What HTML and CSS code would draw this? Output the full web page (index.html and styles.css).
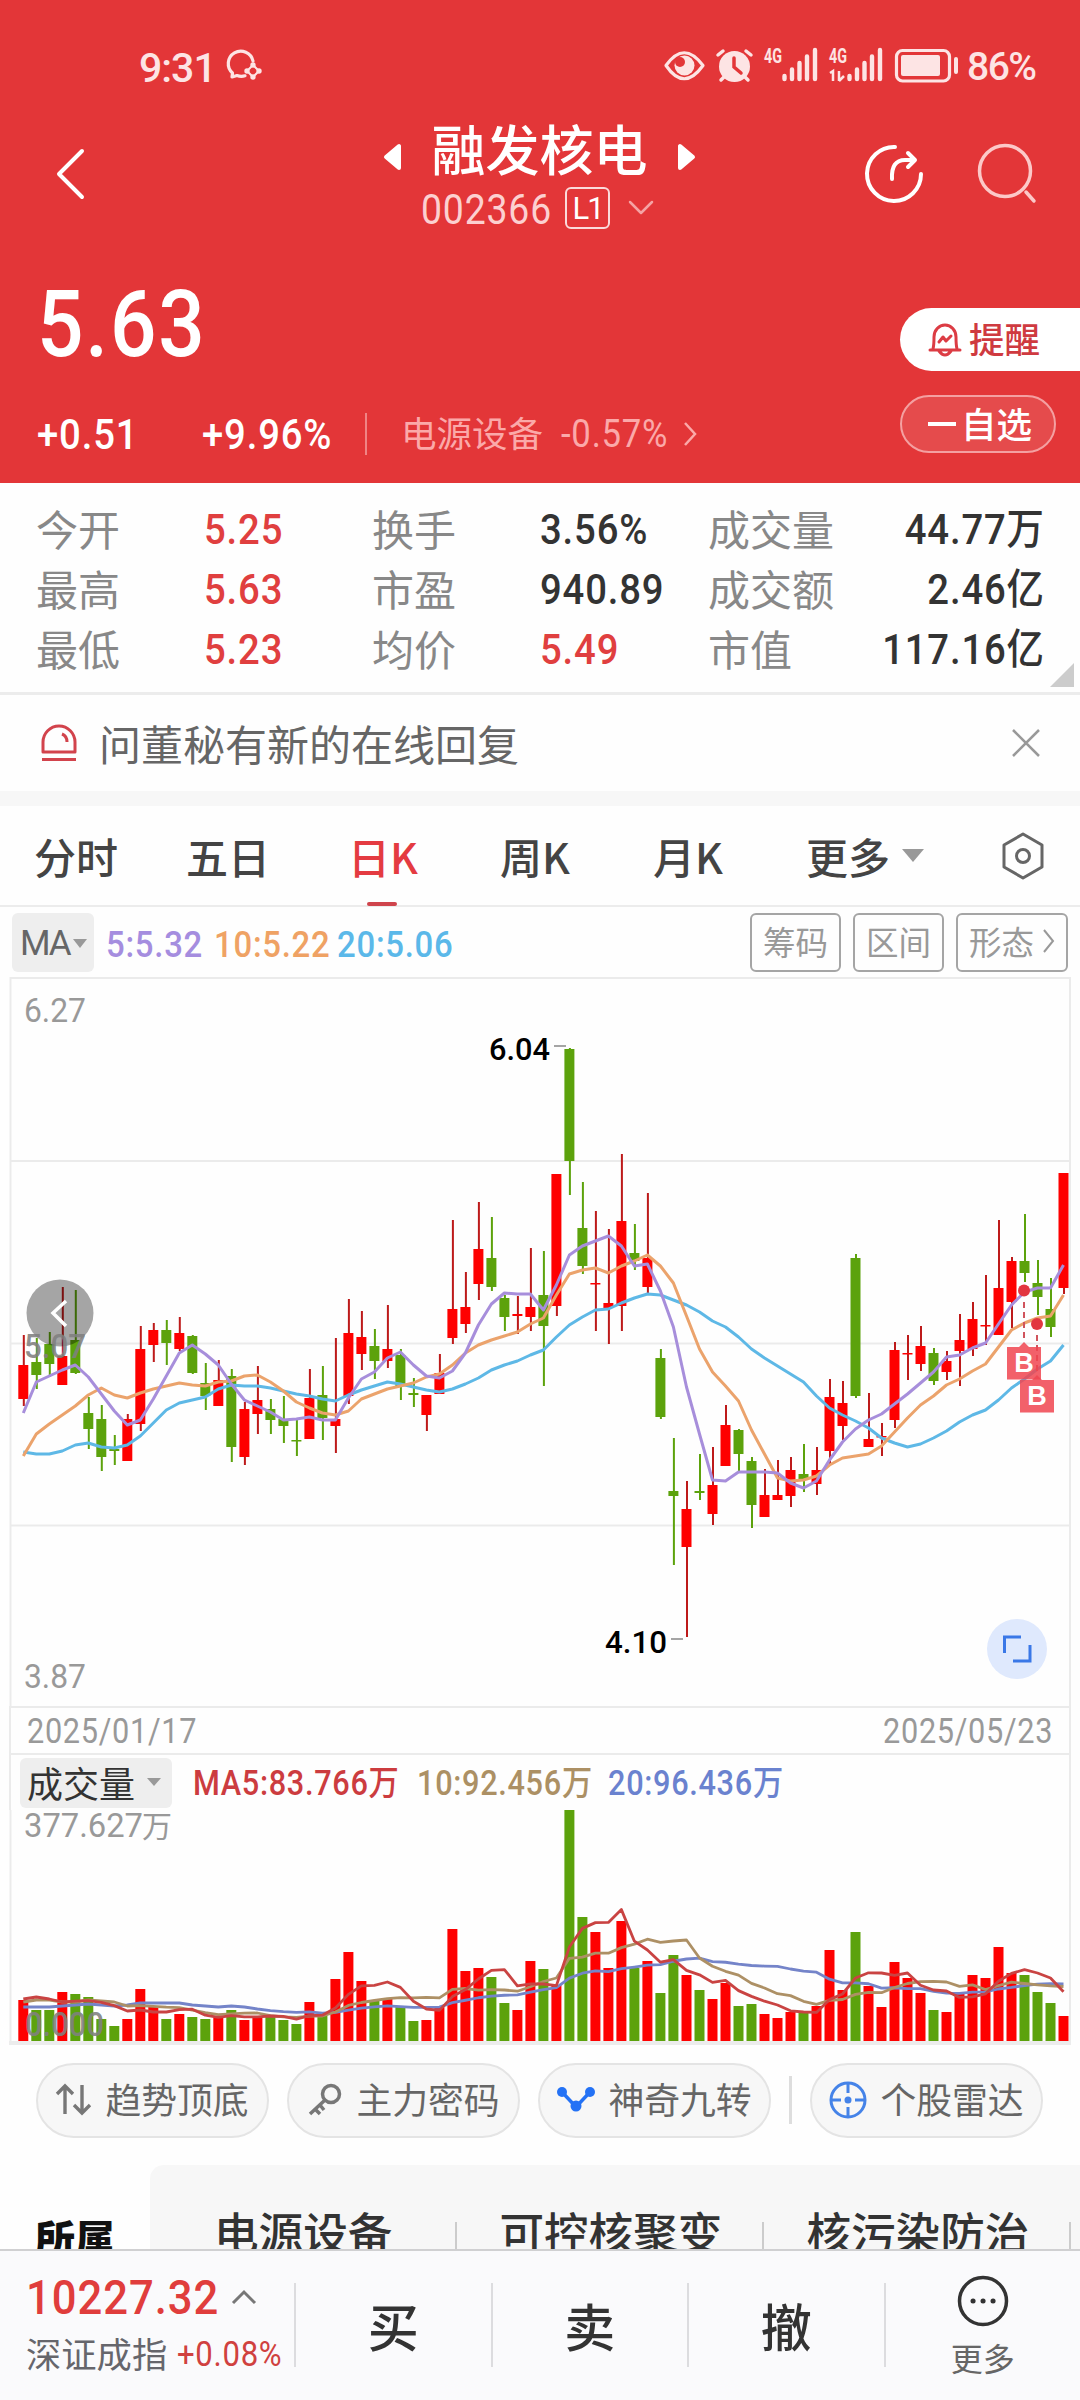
FILE: index.html
```html
<!DOCTYPE html>
<html lang="zh-CN">

<head>
    <meta charset="UTF-8">
    <meta name="viewport" content="width=device-width, initial-scale=1.0">
    <title>融发核电 002366</title>
    <link rel="stylesheet" href="styles.css">
</head>

<body>
    <header class="header">
        <div class="status-bar">
            <span class="clock">9:31</span>
            <svg class="status-msg" width="38" height="34" viewBox="0 0 38 34" fill="none" stroke="#fde4e4" stroke-width="3.2">
                <path d="M27 12A12.5 12.5 0 1 0 6.500 24L6 28L11 26.500Q15 28 19 26.800" stroke-linecap="round" stroke-linejoin="round" />
                <path d="M27 16L33 22L27 28L21 22Z" stroke-width="2" />
                <g fill="#fde4e4" stroke="none"><circle cx="27" cy="16" r="2.700" /><circle cx="33" cy="22" r="2.700" /><circle cx="27" cy="28" r="2.700" /><circle cx="21" cy="22" r="2.700" /></g>
            </svg>
            <svg class="status-icons" width="300" height="40" viewBox="660 46 300 40">
                <g fill="none" stroke="#fde4e4" stroke-width="3.2">
                    <path d="M666 65.500Q684 40 703 65.500Q684 92 666 65.500Z" stroke-linejoin="round" />
                    <rect x="896.500" y="50.500" width="53" height="30.500" rx="6" />
                </g>
                <g fill="#fde4e4">
                    <circle cx="684.500" cy="65.500" r="10" />
                    <circle cx="734.500" cy="66.500" r="15.500" />
                    <rect x="901" y="55" width="39" height="21" rx="2" />
                    <rect x="954" y="57" width="4" height="17" rx="2" />
                </g>
                <circle cx="680" cy="62" r="5" fill="#e33638" />
                <path d="M734 58V67L741 73" fill="none" stroke="#e33638" stroke-width="3.500" stroke-linecap="round" />
                <path d="M718 55L723 51M751 55L746 51M721 80L725 76M748 80L744 76" stroke="#fde4e4" stroke-width="3.500" stroke-linecap="round" />
                <path d="M784.500 76V79M792 69.500V79M799.500 63V79M807 56.500V79M815 50V79M849.500 76V79M857 69.500V79M864.500 63V79M872 56.500V79M880 50V79" stroke="#fde4e4" stroke-width="4.400" stroke-linecap="round" />
                <path d="M830 73L833 71V81M839 71V81M839 81L844 76" fill="none" stroke="#fde4e4" stroke-width="2.500" />
                <text class="net" x="764" y="63" textLength="18" lengthAdjust="spacingAndGlyphs">4G</text>
                <text class="net" x="829" y="63" textLength="18" lengthAdjust="spacingAndGlyphs">4G</text>
            </svg>
            <span class="battery">86%</span>
        </div>

        <div class="nav">
            <svg class="back" width="30" height="52" viewBox="0 0 30 52"><path d="M27 3L4 26L27 49" /></svg>
            <div class="title">
                <div class="title-name">
                    <svg width="18" height="28" viewBox="0 0 18 28"><path d="M16 3V25L3 14Z" /></svg>
                    <h1>融发核电</h1>
                    <svg width="18" height="28" viewBox="0 0 18 28"><path d="M2 3V25L15 14Z" /></svg>
                </div>
                <div class="title-code">
                    <span class="code num">002366</span>
                    <span class="level">L1</span>
                    <svg width="26" height="16" viewBox="0 0 26 16"><path d="M2 2L13 13L24 2" /></svg>
                </div>
            </div>
            <svg class="share" width="62" height="62" viewBox="0 0 62 62">
                <path d="M32 4A27 27 0 1 0 58 31" />
                <path d="M29 36Q28 17 42 17H51M45 10L52 17L45 24" />
            </svg>
            <svg class="search" width="60" height="62" viewBox="0 0 60 62"><circle cx="28" cy="29" r="25.500" /><path d="M49 50L57 59" /></svg>
        </div>

        <div class="quote">
            <div class="price num">5.63</div>
            <div class="change">
                <span class="diff num">+0.51</span>
                <span class="pct num">+9.96%</span>
                <span class="sector">电源设备</span>
                <span class="sector-pct num">-0.57%</span>
                <svg width="14" height="26" viewBox="0 0 14 26"><path d="M2 2L12 13L2 24" /></svg>
            </div>
            <div class="alert-btn">
                <svg width="36" height="36" viewBox="0 0 36 36">
                    <path d="M3 28H33M6 27Q7 23 7 15A11 12 0 0 1 29 15Q29 23 30 27M12 29Q18 37 24 29M12 20L16 15L19 19L24 14" />
                </svg>
                <span>提醒</span>
            </div>
            <div class="fav-btn"><i></i><span>自选</span></div>
        </div>
    </header>

    <section class="stats">
        <span class="k">今开</span><span class="v red num">5.25</span><span class="k">换手</span><span class="v num">3.56%</span><span class="k">成交量</span><span class="v end num">44.77<b>万</b></span>
        <span class="k">最高</span><span class="v red num">5.63</span><span class="k">市盈</span><span class="v num">940.89</span><span class="k">成交额</span><span class="v end num">2.46<b>亿</b></span>
        <span class="k">最低</span><span class="v red num">5.23</span><span class="k">均价</span><span class="v red num">5.49</span><span class="k">市值</span><span class="v end num">117.16<b>亿</b></span>
        <div class="corner"></div>
    </section>

    <section class="notice">
        <svg width="36" height="38" viewBox="0 0 36 38"><path d="M2 28V18A16 16 0 0 1 34 18V28ZM1 35.500H35M21 10Q26 12 26 18" /></svg>
        <span>问董秘有新的在线回复</span>
        <svg class="close" width="28" height="28" viewBox="0 0 28 28"><path d="M1 1L27 27M27 1L1 27" /></svg>
    </section>

    <nav class="tabs">
        <span>分时</span>
        <span>五日</span>
        <span class="active">日K</span>
        <span>周K</span>
        <span>月K</span>
        <span class="more">更多</span>
        <svg class="gear" width="44" height="48" viewBox="0 0 44 48"><path d="M22 2L41 13V35L22 46L3 35V13Z" /><circle cx="22" cy="24" r="6.500" /></svg>
    </nav>

    <div class="ma-row">
        <div class="ma-select">MA</div>
        <span class="ma5 num">5:5.32</span>
        <span class="ma10 num">10:5.22</span>
        <span class="ma20 num">20:5.06</span>
        <div class="ma-btns">
            <span>筹码</span>
            <span>区间</span>
            <span>形态<svg width="12" height="26" viewBox="0 0 12 26"><path d="M1 2L10 13L1 24" /></svg></span>
        </div>
    </div>

    <svg class="kline" id="kline" width="1080" height="729" viewBox="0 7 1080 729">
        <path class="grid" d="M10 191H1070M10 373.500H1070M10 555.500H1070" />
        <path class="frame" d="M10.500 736V8H1070V736" />
        <g id="candles"></g>
        <g id="lines"></g>
        <g class="marker">
            <circle cx="1024" cy="320.500" r="6" /><circle cx="1037" cy="354" r="6" />
            <path d="M1024 332V368M1037 365V404" />
            <path class="tag" d="M1007 377H1019L1024 372L1029 377H1041V409.500H1007Z" />
            <path class="tag" d="M1020 410H1032L1037 405L1042 410H1054V442.500H1020Z" />
            <text x="1024" y="402">B</text><text x="1037" y="435">B</text>
        </g>
        <circle cx="60" cy="343" r="33.500" fill="rgba(0,0,0,.35)" />
        <path d="M66 331L53 343L66 356" fill="none" stroke="#fff" stroke-width="3.500" />
        <g class="axis">
            <text x="24" y="52" textLength="62" lengthAdjust="spacingAndGlyphs">6.27</text>
            <text class="over" x="24" y="388" textLength="62" lengthAdjust="spacingAndGlyphs">5.07</text>
            <text x="24" y="718" textLength="62" lengthAdjust="spacingAndGlyphs">3.87</text>
        </g>
        <g class="peak">
            <text x="489" y="90" textLength="61" lengthAdjust="spacingAndGlyphs">6.04</text>
            <text x="605" y="683" textLength="62" lengthAdjust="spacingAndGlyphs">4.10</text>
            <path d="M554 76H566M671 669H683" />
        </g>
        <circle cx="1017" cy="679" r="30" fill="#dfe9fd" />
        <path d="M1004.500 683V667H1021M1030 675V691H1013" fill="none" stroke="#3a78e7" stroke-width="3" />
    </svg>

    <div class="dates"><span class="num">2025/01/17</span><span class="num">2025/05/23</span></div>

    <div class="vol-row">
        <div class="vol-select">成交量</div>
        <span class="v5 num">MA5:83.766<b>万</b></span>
        <span class="v10 num">10:92.456<b>万</b></span>
        <span class="v20 num">20:96.436<b>万</b></span>
    </div>
    <svg class="volume" width="1080" height="236" viewBox="0 0 1080 236">
        <path class="frame" d="M10.500 0V234M1070 0V234" />
        <path d="M9 233H1071" stroke="#ececec" stroke-width="4" />
        <g id="bars"></g>
        <g id="volLines"></g>
        <g class="axis">
            <text x="24" y="27" textLength="119" lengthAdjust="spacingAndGlyphs">377.627</text>
            <text x="142" y="27" class="unit">万</text>
            <text class="over" x="25" y="226" textLength="79" lengthAdjust="spacingAndGlyphs">0.000</text>
        </g>
    </svg>

    <div class="chips">
        <div class="chip">
            <svg width="36" height="34" viewBox="0 0 36 34"><path d="M9 31V3M1 11L9 3L17 11M26 2V30M18 22L26 30L34 22" stroke="#777" stroke-width="3.400" /></svg><span>趋势顶底</span>
        </div>
        <div class="chip">
            <svg width="36" height="34" viewBox="0 0 36 34"><circle cx="24" cy="11" r="8.500" stroke="#777" stroke-width="3.500" /><path d="M18 17L3 31M8 26L13 31M13 22L17 27" stroke="#777" stroke-width="3.500" /></svg><span>主力密码</span>
        </div>
        <div class="chip">
            <svg width="38" height="34" viewBox="0 0 38 34"><path d="M5 9L19 24L33 9" fill="none" stroke="#2472f5" stroke-width="3.500" /><g fill="#2472f5"><circle cx="5" cy="9" r="5" /><circle cx="19" cy="23" r="5.500" /><circle cx="33" cy="9" r="5" /></g></svg><span>神奇九转</span>
        </div>
        <i class="chip-line"></i>
        <div class="chip">
            <svg width="38" height="38" viewBox="0 0 38 38"><g stroke="#4583e8" stroke-width="3"><circle cx="19" cy="19" r="17" /><path d="M19 2V12M19 26V36M2 19H12M26 19H36" /></g><circle cx="19" cy="19" r="3.500" fill="#4583e8" /></svg><span>个股雷达</span>
        </div>
    </div>

    <div class="concepts">
        <strong>所属</strong>
        <div class="concept-list"><span>电源设备</span><span>可控核聚变</span><span>核污染防治</span></div>
    </div>

    <footer class="bottom-bar">
        <div class="index">
            <div class="index-value"><span class="num">10227.32</span><svg width="26" height="16" viewBox="0 0 26 16"><path d="M2 14L13 3L24 14" /></svg></div>
            <div class="index-name">深证成指<span class="num">+0.08%</span></div>
        </div>
        <div class="action">买</div>
        <div class="action">卖</div>
        <div class="action">撤</div>
        <div class="action more-action">
            <svg width="52" height="52" viewBox="0 0 52 52"><circle cx="26" cy="26" r="23.500" /><path d="M16 26H16.100M26 26H26.100M36 26H36.100" /></svg>
            更多
        </div>
    </footer>

    <script src="script.js"></script>
</body>

</html>
```

FILE: styles.css
```css
* {
    margin: 0;
    padding: 0;
    box-sizing: border-box;
}

body {
    width: 1080px;
    height: 2400px;
    overflow: hidden;
    background: #fefefe;
    color: #333;
    font-family: "Noto Sans CJK SC", sans-serif;
    font-size: 42px;
    line-height: 1;
    white-space: nowrap;
}

svg {
    display: block;
    flex: none;
    overflow: visible;
}

/* condensed figures */
.num {
    font-family: Roboto, "Noto Sans CJK SC", sans-serif;
    font-weight: 500;
    letter-spacing: 0.022em;
    transform: scaleX(.89);
    transform-origin: left center;
}

/* header */
.header {
    height: 483px;
    background: #e33638;
    color: #fff;
}

.status-bar {
    height: 132px;
    display: flex;
    align-items: center;
    padding-left: 139px;
    color: #fde4e4;
    font-family: Roboto, sans-serif;
    font-weight: 500;
    font-size: 41px;
}

.clock {
    width: 87px;
    padding-top: 4px;
    letter-spacing: -1px;
}

.status-icons {
    margin-left: 396px;
}

.battery {
    margin-left: 7px;
    padding-top: 3px;
    font-size: 39px;
    letter-spacing: -1.5px;
}

.net {
    font-size: 21px;
    font-weight: 700;
    fill: #fde4e4;
}

.nav {
    height: 106px;
    display: flex;
    padding-left: 55px;
}

.nav path,
.nav circle {
    fill: none;
    stroke: #fff;
    stroke-width: 4;
    stroke-linecap: round;
    stroke-linejoin: round;
}

.back {
    margin-top: 16px;
}

.title {
    width: 320px;
    margin-left: 295px;
}

.title-name {
    height: 50px;
    display: flex;
    align-items: center;
    justify-content: space-between;
    padding: 0 4px 0 3px;
    margin-top: -6px;
}

.title-name h1 {
    margin-top: -7px;
    font-size: 54px;
    font-weight: 500;
    line-height: 50px;
}

.title-name svg {
    margin-top: 11px;
}

.title-name path {
    fill: #fff;
}

.title-code {
    height: 42px;
    display: flex;
    align-items: center;
    margin: 11px 0 0 41px;
}

.code {
    width: 144px;
    font-size: 42px;
    font-weight: 400;
    color: #fcd0d0;
    padding-top: 4px;
}

.level {
    width: 45px;
    height: 42px;
    border: 2px solid #fbdada;
    border-radius: 6px;
    font-family: Roboto, sans-serif;
    font-size: 31px;
    letter-spacing: -2px;
    line-height: 40px;
    text-align: center;
    margin-right: 18px;
}

.title-code path {
    stroke: #f5a3a4;
    stroke-width: 2.5;
}

.share {
    margin: 11px 0 0 163px;
}

.search {
    margin: 10px 0 0 52px;
}

.search path,
.search circle {
    stroke: #fcc8c8;
    stroke-width: 3.5;
}

.quote {
    position: relative;
    padding-left: 37px;
}

.price {
    height: 171px;
    padding-top: 41px;
    font-size: 92px;
    line-height: 92px;
}

.change {
    display: flex;
    align-items: center;
    height: 50px;
    font-size: 43px;
}

.diff {
    width: 165px;
}

.pct {
    width: 163px;
}

.sector {
    height: 42px;
    line-height: 38px;
    padding-left: 34px;
    border-left: 2px solid #f08485;
    font-size: 35.5px;
    color: #fba9a9;
}

.sector-pct {
    width: 122px;
    margin-left: 18px;
    font-size: 39px;
    font-weight: 400;
    color: #fba9a9;
}

.change path {
    fill: none;
    stroke: #fba9a9;
    stroke-width: 2.5;
}

.alert-btn,
.fav-btn {
    position: absolute;
    left: 900px;
    display: flex;
    align-items: center;
    font-size: 35.5px;
    font-weight: 500;
}

.alert-btn span,
.fav-btn span {
    margin-top: -3px;
}

.alert-btn {
    top: 70px;
    width: 180px;
    height: 63px;
    padding-left: 27px;
    gap: 6px;
    background: #fff;
    color: #cf3a40;
    border-radius: 32px 0 0 32px;
}

.alert-btn path {
    fill: none;
    stroke: #dc3c44;
    stroke-width: 3;
    stroke-linecap: round;
    stroke-linejoin: round;
}

.fav-btn {
    top: 157px;
    width: 156px;
    height: 58px;
    padding-left: 26px;
    gap: 5px;
    border: 2px solid #f4a0a1;
    border-radius: 29px;
    background: #e54b4c;
}

.fav-btn i {
    width: 28px;
    height: 4px;
    background: #fff;
}

/* key figures */
.stats {
    position: relative;
    height: 212px;
    display: grid;
    grid-template-columns: 168px 168px 168px 168px 150px 186px;
    grid-auto-rows: 60px;
    align-items: center;
    padding: 16px 0 0 36px;
    border-bottom: 3px solid #ececec;
}

.stats .k {
    margin-top: -3px;
    font-size: 42px;
    color: #888;
}

.stats .v {
    font-size: 43px;
}

.stats .end {
    text-align: right;
    transform-origin: right center;
}

.num b {
    font-weight: 500;
    letter-spacing: 0;
}

.stats b {
    font-size: 42px;
}

.red {
    color: #e03f3f;
}

.corner {
    position: absolute;
    right: 6px;
    bottom: 5px;
    border-left: 24px solid transparent;
    border-bottom: 24px solid #ccc;
}

.notice {
    height: 111px;
    display: flex;
    align-items: center;
    padding: 0 40px 1px 41px;
    border-bottom: 15px solid #f7f7f7;
    color: #666;
}

.notice span {
    margin: 1px 0 0 22px;
}

.notice path {
    fill: none;
    stroke: #d2434c;
    stroke-width: 3;
    stroke-linejoin: round;
}

.notice .close {
    margin-left: auto;
}

.notice .close path {
    stroke: #999;
    stroke-width: 2.5;
}

/* period tabs */
.tabs {
    height: 101px;
    display: flex;
    align-items: center;
    padding-left: 34px;
    border-bottom: 2px solid #ececec;
    color: #444;
    font-size: 42px;
    font-weight: 500;
}

.tabs span {
    width: 153px;
}

.tabs span:nth-child(2) {
    width: 162px;
}

.tabs span:nth-child(3),
.tabs span:nth-child(1) {
    width: 152px;
}

.tabs .active {
    position: relative;
    color: #e43b41;
}

.tabs .active::after {
    content: "";
    position: absolute;
    left: 19px;
    bottom: -29px;
    width: 30px;
    height: 4px;
    border-radius: 2px;
    background: #cf444c;
}

.tabs .more {
    width: 195px;
    display: flex;
    align-items: center;
    gap: 12px;
}

.more::after {
    content: "";
    border: 11px solid transparent;
    border-top: 13px solid #999;
    border-bottom: 0;
}

.gear path,
.gear circle {
    fill: none;
    stroke: #666;
    stroke-width: 3;
    stroke-linejoin: round;
}

.ma-row {
    height: 70px;
    display: flex;
    align-items: center;
    padding: 0 12px;
    font-size: 37px;
}

.ma-row .num {
    padding-top: 4px;
}

.ma-select {
    width: 82px;
    height: 59px;
    margin-right: 12px;
    padding: 3px 0 0 8px;
    display: flex;
    align-items: center;
    gap: 3px;
    background: #eee;
    border-radius: 6px;
    color: #666;
    font-family: Roboto, sans-serif;
    font-size: 35px;
    letter-spacing: -2px;
}

.ma-select::after {
    content: "";
    border: 7px solid transparent;
    border-top: 9px solid #999;
    border-bottom: 0;
}

.ma5 {
    width: 108px;
    color: #a58ddf;
}

.ma10 {
    width: 123px;
    color: #efa264;
}

.ma20 {
    color: #5bb8e9;
}

.ma-btns {
    display: flex;
    gap: 12px;
    margin-left: auto;
}

.ma-btns span {
    height: 59px;
    padding: 0 11px 2px;
    display: flex;
    align-items: center;
    gap: 9px;
    border: 2px solid #a5a5a5;
    border-radius: 6px;
    color: #999;
    font-size: 32.5px;
}

.ma-btns path {
    fill: none;
    stroke: #999;
    stroke-width: 2;
}

/* charts */
.grid,
.frame {
    fill: none;
    stroke: #ebebeb;
    stroke-width: 2;
}

.axis text,
.peak text {
    font-family: Roboto, sans-serif;
    font-size: 34px;
    fill: #999;
}

.axis .over {
    font-weight: 500;
    fill: rgba(128, 128, 128, .9);
}

.axis .unit {
    font-family: "Noto Sans CJK SC", sans-serif;
    font-size: 30px;
}

.peak text {
    font-size: 32px;
    font-weight: 500;
    fill: #000;
}

.peak path {
    stroke: #888;
    stroke-width: 1.5;
}

.up {
    fill: #fe0000;
}

.down {
    fill: #5ca20c;
}

.wick.up {
    fill: #bd1a1a;
}

.line {
    fill: none;
    stroke-width: 3;
    stroke-linejoin: round;
}

.marker circle {
    fill: #e23640;
}

.marker path {
    fill: none;
    stroke: #d0545c;
    stroke-width: 2;
    stroke-dasharray: 6 4;
}

.marker .tag {
    fill: rgba(240, 69, 80, .85);
    stroke: none;
}

.marker text {
    font: 700 27px "Liberation Sans", sans-serif;
    fill: #fff;
    text-anchor: middle;
}

.dates {
    height: 49px;
    margin: 0 9px;
    padding: 2px 16px 0;
    display: flex;
    align-items: center;
    justify-content: space-between;
    border: 2px solid #ebebeb;
    font-size: 34.5px;
    color: #999;
}

.dates .num {
    font-weight: 400;
}

.dates .num:last-child {
    transform-origin: right center;
}

.vol-row {
    height: 55px;
    margin: 0 9px;
    padding-left: 9px;
    display: flex;
    align-items: center;
    border: 2px solid #ebebeb;
    border-width: 0 2px;
    font-size: 34.5px;
}

.vol-row .num {
    padding-top: 2px;
}

.vol-row b {
    font-size: 34px;
}

.vol-select {
    width: 152px;
    height: 50px;
    padding: 0 0 1px 7px;
    margin-right: 21px;
    display: flex;
    align-items: center;
    gap: 12px;
    background: #eee;
    border-radius: 6px;
    font-size: 36px;
}

.vol-select::after {
    content: "";
    border: 7px solid transparent;
    border-top: 8px solid #999;
    border-bottom: 0;
}

.v5 {
    width: 224px;
    color: #cc3c3f;
}

.v10 {
    width: 191px;
    color: #ac9064;
}

.v20 {
    color: #6a82cf;
}

.volume .line {
    stroke-width: 2.8;
}

/* shortcuts */
.chips {
    height: 119px;
    display: flex;
    align-items: center;
    gap: 18px;
    padding: 0 0 11px 36px;
}

.chip {
    width: 233px;
    height: 75px;
    display: flex;
    align-items: center;
    justify-content: center;
    gap: 13px;
    border: 2px solid #e4e4e4;
    border-radius: 38px;
    background: #f7f7f7;
    color: #666;
    font-size: 35.8px;
}

.chip span {
    margin-top: -3px;
}

.chip path,
.chip circle[stroke],
.chip g[stroke] circle {
    fill: none;
}

.chip-line {
    width: 3px;
    height: 48px;
    background: #ddd;
}

.concepts {
    height: 84px;
    display: flex;
    overflow: hidden;
    font-size: 44.6px;
    font-weight: 500;
}

.concepts strong {
    width: 150px;
    padding: 52px 0 0 35px;
    font-size: 40px;
    font-weight: 900;
    color: #111;
}

.concept-list {
    flex: 1;
    display: flex;
    padding: 44px 0 0 22px;
    border-radius: 14px 0 0 0;
    background: #f7f7f7;
}

.concept-list span {
    flex: none;
    position: relative;
    padding: 0 42px;
}

.concept-list span:first-child {
    padding-right: 65px;
}

.concept-list span::after {
    content: "";
    position: absolute;
    right: 0;
    top: 13px;
    width: 2px;
    height: 40px;
    background: #ccc;
}

/* trade bar */
.bottom-bar {
    height: 151px;
    display: flex;
    padding-top: 32px;
    background: #fafafc;
    border-top: 2px solid #d0d0d2;
}

.index {
    width: 294px;
    padding-left: 26px;
}

.index-value {
    display: flex;
    align-items: center;
    height: 28px;
    gap: 15px;
    font-size: 49px;
    color: #e03d3c;
}

.index-value .num {
    width: 190px;
}

.index-value path {
    fill: none;
    stroke: #777;
    stroke-width: 3;
}

.index-name {
    display: flex;
    align-items: center;
    gap: 10px;
    margin-top: 22px;
    font-size: 35.3px;
    color: #66666c;
}

.index-name .num {
    padding-top: 4px;
    font-size: 35px;
    font-weight: 400;
    color: #d0413f;
}

.action {
    width: 197.5px;
    height: 84px;
    display: flex;
    align-items: center;
    justify-content: center;
    border-left: 2px solid #dcdcdf;
    font-size: 51px;
    font-weight: 500;
}

.more-action {
    flex-direction: column;
    justify-content: flex-start;
    gap: 14px;
    overflow: visible;
    font-size: 32px;
    font-weight: 400;
    color: #666;
}

.more-action svg {
    margin-top: -8px;
}

.more-action circle,
.more-action path {
    fill: none;
    stroke: #333;
    stroke-width: 3.5;
}

.more-action path {
    stroke-width: 5;
    stroke-linecap: round;
}
```

FILE: script.js
```javascript
// [up, high, body top, body bottom, low, volume]
const days = [
    [1, 365, 395, 429, 436, 41], [0, 368, 392, 405, 419, 31], [0, 362, 374, 394, 407, 31], [1, 317, 386, 415, 415, 49],
    [0, 320, 370, 403, 404, 47], [0, 427, 443, 459, 479, 44], [0, 435, 449, 487, 501, 22], [0, 465, 479, 481, 495, 15],
    [1, 444, 449, 491, 491, 22], [1, 356, 379, 454, 461, 52], [1, 353, 360, 375, 392, 34], [0, 350, 360, 373, 395, 22],
    [1, 347, 363, 379, 381, 27], [0, 365, 366, 403, 404, 24], [0, 393, 413, 426, 440, 22], [1, 390, 410, 436, 436, 23],
    [0, 399, 406, 477, 492, 31], [1, 432, 439, 487, 495, 21], [1, 396, 430, 444, 464, 24], [0, 429, 439, 450, 464, 26],
    [0, 426, 449, 456, 473, 21], [0, 450, 470, 471, 486, 17], [1, 399, 428, 469, 469, 39], [0, 396, 425, 448, 470, 26],
    [1, 368, 449, 456, 483, 62], [1, 329, 363, 426, 434, 89], [1, 341, 367, 384, 400, 60], [0, 359, 376, 391, 409, 41],
    [1, 335, 379, 391, 398, 43], [0, 379, 385, 416, 430, 35], [0, 408, 423, 425, 437, 20], [1, 425, 425, 445, 461, 21],
    [1, 384, 403, 424, 424, 34], [1, 250, 339, 368, 374, 112], [1, 302, 337, 354, 363, 70], [1, 232, 279, 314, 330, 73],
    [0, 247, 288, 317, 321, 64], [0, 325, 328, 347, 361, 38], [1, 326, 344, 346, 364, 31], [1, 278, 337, 347, 361, 80],
    [0, 281, 325, 356, 416, 72], [1, 204, 204, 336, 346, 56], [0, 78, 79, 191, 225, 231], [0, 212, 258, 296, 304, 124],
    [1, 241, 313, 314, 361, 109], [1, 259, 333, 338, 374, 73], [1, 184, 251, 336, 361, 120], [0, 254, 283, 291, 300, 73],
    [1, 223, 288, 317, 323, 80], [0, 379, 388, 447, 449, 48], [0, 468, 521, 526, 595, 86], [1, 511, 539, 577, 667, 66],
    [0, 484, 521, 523, 530, 51], [1, 477, 515, 544, 555, 42], [1, 435, 455, 496, 496, 58], [0, 459, 460, 484, 501, 35],
    [0, 487, 491, 535, 558, 37], [1, 499, 525, 547, 547, 27], [1, 490, 525, 530, 530, 23], [1, 487, 500, 526, 537, 29],
    [0, 474, 504, 510, 522, 29], [1, 477, 500, 514, 525, 35], [1, 409, 427, 481, 494, 91], [1, 411, 433, 456, 470, 51],
    [0, 284, 288, 426, 428, 109], [1, 423, 469, 477, 477, 55], [1, 453, 466, 467, 486, 34], [1, 372, 380, 450, 458, 79],
    [1, 365, 383, 384, 410, 63], [1, 356, 376, 394, 401, 48], [0, 378, 383, 411, 415, 31], [1, 381, 391, 402, 410, 29],
    [1, 344, 370, 381, 416, 47], [1, 332, 349, 379, 386, 66], [1, 305, 355, 356, 375, 63], [1, 250, 318, 365, 365, 94],
    [1, 287, 291, 332, 358, 68], [0, 244, 291, 303, 312, 66], [0, 290, 313, 327, 345, 49], [0, 308, 339, 357, 367, 38],
    [1, 203, 203, 318, 324, 25]
];

const ma20 = [482, 484, 484, 481, 475, 473, 477, 478, 475, 466, 453, 440, 433, 430, 427, 419, 415, 416, 416, 418, 421, 424, 426, 429, 431, 425, 420, 416, 412, 414, 417, 420, 422, 419, 414, 408, 400, 395, 391, 385, 380, 367, 355, 347, 340, 339, 333, 328, 324, 325, 330, 335, 342, 351, 357, 367, 379, 388, 396, 404, 412, 426, 438, 445, 451, 458, 468, 473, 477, 474, 468, 461, 452, 445, 440, 430, 418, 409, 399, 391, 375];
const ma10 = [486, 464, 454, 445, 436, 425, 418, 425, 428, 423, 419, 416, 413, 415, 416, 412, 411, 406, 405, 412, 421, 432, 438, 443, 445, 441, 429, 424, 419, 416, 413, 407, 404, 395, 383, 375, 370, 366, 362, 354, 348, 325, 304, 300, 298, 303, 296, 291, 285, 296, 313, 346, 379, 402, 416, 431, 460, 484, 508, 511, 510, 506, 495, 488, 486, 484, 476, 462, 448, 435, 426, 415, 409, 401, 394, 377, 360, 353, 348, 346, 325];
const ma5 = [443, 412, 406, 400, 395, 407, 424, 441, 455, 450, 429, 406, 383, 375, 384, 395, 414, 430, 436, 442, 450, 449, 447, 450, 450, 428, 409, 402, 388, 382, 395, 406, 408, 401, 383, 355, 334, 323, 324, 324, 340, 315, 285, 276, 271, 266, 276, 296, 294, 321, 357, 417, 464, 510, 511, 502, 502, 502, 503, 513, 518, 511, 490, 472, 459, 450, 444, 434, 424, 413, 402, 387, 385, 378, 373, 354, 335, 322, 318, 318, 295];

const BASE = 231;
const x = i => 23.3 + i * 13.003;

function rect(cls, left, top, width, height) {
    return `<rect class="${cls}" x="${left.toFixed(1)}" y="${top}" width="${width}" height="${height}"/>`;
}

function line(values, color) {
    const points = values.map((v, i) => `${x(i).toFixed(1)},${v}`).join(" ");
    return `<polyline class="line" stroke="${color}" points="${points}"/>`;
}

// moving average of volume, the first values come from days left of the chart
function volumeMa(n, head) {
    return days.map((d, i) => {
        if (i < head.length) return BASE - head[i];
        const part = days.slice(i - n + 1, i + 1);
        return BASE - part.reduce((sum, p) => sum + p[5], 0) / n;
    });
}

document.getElementById("candles").innerHTML = days.map(([up, high, top, bottom, low], i) => {
    const cls = up ? "up" : "down";
    return rect("wick " + cls, x(i) - 0.5, high, 2, low - high) +
        rect(cls, x(i) - 5, top, 10, Math.max(bottom - top, 1.5));
}).join("");

document.getElementById("lines").innerHTML =
    line(ma20, "#5eb8e6") + line(ma10, "#eba36c") + line(ma5, "#a78edb");

document.getElementById("bars").innerHTML = days.map((d, i) =>
    rect(d[0] ? "up" : "down", x(i) - 5, BASE - d[5], 10, d[5])).join("");

document.getElementById("volLines").innerHTML =
    line(volumeMa(20, [34, 34, 34, 35, 36, 37, 36, 35, 36, 38, 38, 38, 38, 36, 35, 34, 35, 34, 32]), "#7484c9") +
    line(volumeMa(10, [39, 41, 41, 39, 39, 41, 40, 39, 35]), "#ad9065") +
    line(volumeMa(5, [42, 44, 42, 39]), "#c94342");
```
